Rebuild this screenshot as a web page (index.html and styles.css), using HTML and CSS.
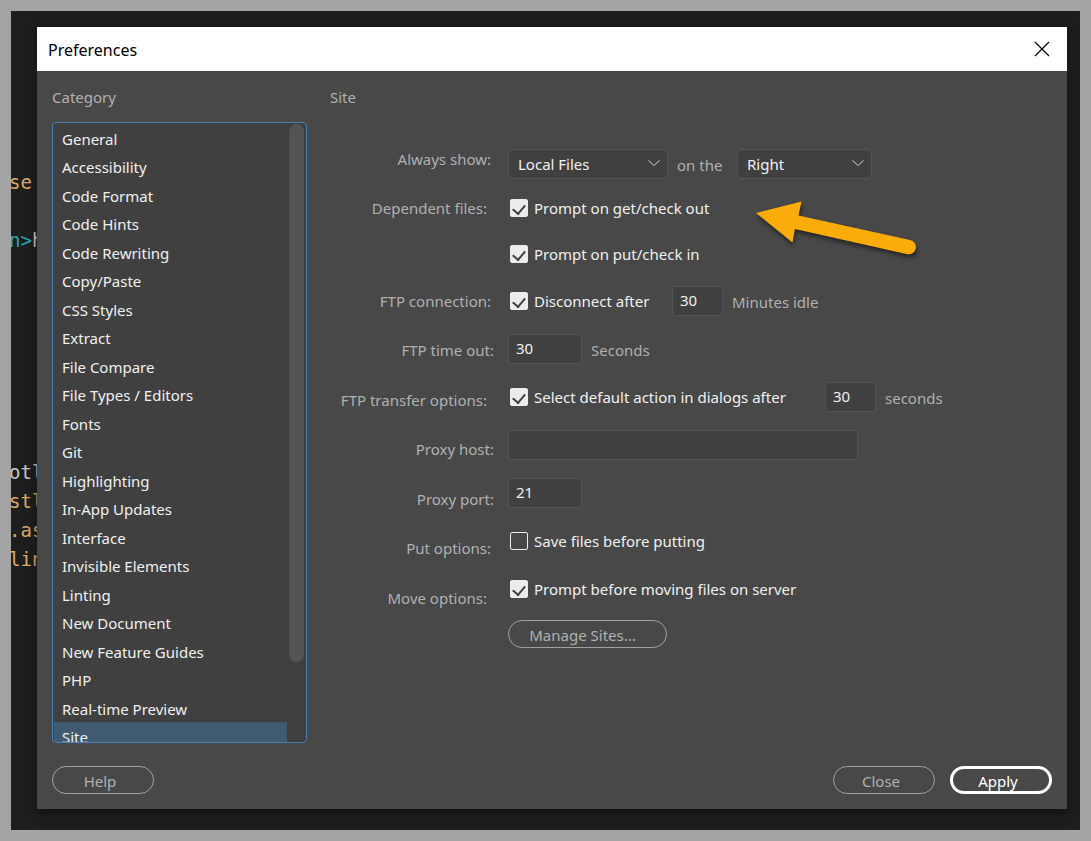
FILE: index.html
```html
<!DOCTYPE html>
<html lang="en">
<head>
	<meta charset="utf-8">
	<meta name="viewport" content="width=device-width, initial-scale=1">
	<title>Preferences</title>
	<link rel="stylesheet" href="styles.css">
</head>
<body>
	<div class="desktop">
<pre class="code" aria-hidden="true"><span class="string">se</span>

<span class="tag">n&gt;</span>h







otl
<span class="string">stl</span>
<span class="string">.as</span>
<span class="string">lin</span></pre>

		<div class="dialog" role="dialog" aria-labelledby="dialog-title">
			<header class="titlebar">
				<h1 id="dialog-title">Preferences</h1>
				<button class="close-icon" type="button" aria-label="Close window">
					<svg width="16" height="16" viewBox="0 0 16 16"><path d="M1 1L15 15M15 1L1 15" stroke="#000" stroke-width="1.2" fill="none"/></svg>
				</button>
			</header>

			<div class="content">
				<nav class="sidebar">
					<h2>Category</h2>
					<div class="list-box">
						<ul class="categories">
							<li><a href="#">General</a></li>
							<li><a href="#">Accessibility</a></li>
							<li><a href="#">Code Format</a></li>
							<li><a href="#">Code Hints</a></li>
							<li><a href="#">Code Rewriting</a></li>
							<li><a href="#">Copy/Paste</a></li>
							<li><a href="#">CSS Styles</a></li>
							<li><a href="#">Extract</a></li>
							<li><a href="#">File Compare</a></li>
							<li><a href="#">File Types / Editors</a></li>
							<li><a href="#">Fonts</a></li>
							<li><a href="#">Git</a></li>
							<li><a href="#">Highlighting</a></li>
							<li><a href="#">In-App Updates</a></li>
							<li><a href="#">Interface</a></li>
							<li><a href="#">Invisible Elements</a></li>
							<li><a href="#">Linting</a></li>
							<li><a href="#">New Document</a></li>
							<li><a href="#">New Feature Guides</a></li>
							<li><a href="#">PHP</a></li>
							<li><a href="#">Real-time Preview</a></li>
							<li class="selected"><a href="#">Site</a></li>
						</ul>
						<div class="scrollbar"><div class="thumb"></div></div>
					</div>
				</nav>

				<form class="panel">
					<h2>Site</h2>
					<div class="divider"></div>
					<div class="form">
						<div class="labels">
							<label for="show">Always show:</label>
							<label for="get" class="tall far">Dependent files:</label>
							<label for="disconnect">FTP connection:</label>
							<label for="timeout" class="near">FTP time out:</label>
							<label for="default-action" class="far">FTP transfer options:</label>
							<label for="host" class="near">Proxy host:</label>
							<label for="port" class="near">Proxy port:</label>
							<label for="save">Put options:</label>
							<label for="move" class="far">Move options:</label>
						</div>
						<div class="fields">
							<div class="row short">
								<span class="select wide">
									<select id="show"><option>Local Files</option><option>Remote Server</option></select>
									<svg width="14" height="8" viewBox="0 0 14 8"><path d="M1.5 1.500L7 6.500L12.500 1.500" stroke="#d0d0d0" fill="none"/></svg>
								</span>
								<label for="side" class="muted on-the">on the</label>
								<span class="select">
									<select id="side"><option>Right</option><option>Left</option></select>
									<svg width="14" height="8" viewBox="0 0 14 8"><path d="M1.5 1.500L7 6.500L12.500 1.500" stroke="#d0d0d0" fill="none"/></svg>
								</span>
							</div>
							<div class="row medium">
								<input type="checkbox" id="get" checked>
								<label for="get">Prompt on get/check out</label>
							</div>
							<div class="row medium">
								<input type="checkbox" id="put" checked>
								<label for="put">Prompt on put/check in</label>
							</div>
							<div class="row">
								<input type="checkbox" id="disconnect" checked>
								<label for="disconnect" class="disconnect">Disconnect after</label>
								<input type="text" id="idle" class="small" value="30">
								<label for="idle" class="muted">Minutes idle</label>
							</div>
							<div class="row">
								<input type="text" id="timeout" value="30">
								<label for="timeout" class="muted">Seconds</label>
							</div>
							<div class="row">
								<input type="checkbox" id="default-action" checked>
								<label for="default-action" class="default-action">Select default action in dialogs after</label>
								<input type="text" id="delay" class="small" value="30">
								<label for="delay" class="muted">seconds</label>
							</div>
							<div class="row">
								<input type="text" id="host" class="long" value="">
							</div>
							<div class="row">
								<input type="text" id="port" value="21">
							</div>
							<div class="row">
								<input type="checkbox" id="save">
								<label for="save">Save files before putting</label>
							</div>
							<div class="row">
								<input type="checkbox" id="move" checked>
								<label for="move">Prompt before moving files on server</label>
							</div>
							<div class="row short">
								<button class="btn manage" type="button">Manage Sites...</button>
							</div>
						</div>
						<svg class="arrow" width="180" height="70" viewBox="0 0 180 70">
							<path d="M6 18L51.500 6.500L48.500 20.500L160 45A7.200 7.200 0 0 1 157.500 59.200L45 34L42.500 47.500Z" fill="#f9ac0a"/>
						</svg>
					</div>
				</form>
			</div>

			<footer class="footer">
				<button class="btn help" type="button">Help</button>
				<button class="btn" type="button">Close</button>
				<button class="btn apply" type="button">Apply</button>
			</footer>
		</div>
	</div>
</body>
</html>
```
FILE: styles.css
```css
* {
	box-sizing: border-box;
}

body {
	display: flex;
	height: 100vh;
	margin: 0;
	padding: 11px;
	background-color: #a4a4a4;
	font-family: 'Noto Sans', sans-serif;
	font-size: 15px;
	color: #f0f0f0;
}

.desktop {
	position: relative;
	flex: 1;
	display: flex;
	min-width: 0;
	padding: 16px 13px 21px 26px;
	background-color: #1e1e1e;
	overflow: hidden;
}

/* editor behind the dialog */
.code {
	position: absolute;
	top: 157px;
	left: -2px;
	margin: 0;
	font-family: 'DejaVu Sans Mono', monospace;
	font-size: 19px;
	line-height: 29px;
	color: #c8c8c8;
}

.code .string {
	color: #d9ab66;
}

.code .tag {
	color: #2aa5b8;
}

.dialog {
	position: relative;
	flex: 1;
	display: flex;
	flex-direction: column;
	min-width: 0;
	background-color: #484848;
	box-shadow: 0 3px 10px rgba(0, 0, 0, 0.5);
}

.titlebar {
	display: flex;
	align-items: center;
	justify-content: space-between;
	height: 44px;
	padding: 0 17px 0 11px;
	background-color: #fff;
	color: #000;
}

h1 {
	margin: 0;
	padding-top: 2px;
	font-size: 16px;
	font-weight: normal;
}

.close-icon {
	display: flex;
	padding: 0;
	border: 0;
	background: none;
}

.content {
	flex: 1;
	display: grid;
	grid-template-columns: 255px 1fr;
	grid-template-rows: 100%;
	gap: 23px;
	min-height: 0;
	padding: 0 15px;
}

h2 {
	margin: 0;
	padding: 13px 0 12px;
	font-size: 15px;
	line-height: 26px;
	font-weight: normal;
	color: #b0b0b0;
}

.sidebar {
	display: flex;
	flex-direction: column;
}

.list-box {
	flex: 1;
	display: flex;
	min-height: 0;
	padding: 1px 2px 0 1px;
	border: 1px solid #4581b8;
	border-radius: 4px;
	background-color: #404040;
	overflow: hidden;
}

.categories {
	flex: 1;
	margin: 0;
	padding: 0;
	list-style: none;
}

.categories li {
	height: 28px;
	padding: 3px 8px 0;
	line-height: 24px;
}

.categories li:nth-child(even) {
	height: 29px;
}

.categories .selected {
	background-color: #405a72;
}

.categories a {
	color: #f0f0f0;
	text-decoration: none;
}

.scrollbar {
	width: 15px;
	margin-left: 2px;
}

.thumb {
	height: 87%;
	border-radius: 8px;
	background-color: #535353;
}

.divider {
	height: 4px;
	border-top: 1px solid #4b4b4b;
	border-bottom: 1px solid #4b4b4b;
}

.form {
	position: relative;
	display: flex;
	padding-top: 9px;
}

.labels {
	display: flex;
	flex-direction: column;
	width: 178px;
	color: #b0b0b0;
	text-align: right;
}

.labels label {
	height: 49px;
	padding-right: 17px;
	line-height: 49px;
}

.labels label:nth-child(even) {
	height: 50px;
}

.labels .tall:nth-child(even) {
	height: 93px;
}

.labels .near {
	padding-right: 14px;
}

.labels .far {
	padding-right: 21px;
}

.fields {
	flex: 1;
	padding-top: 8px;
}

.row {
	display: flex;
	align-items: center;
	height: 48px;
}

.row.medium {
	height: 46px;
}

.row.short {
	height: 42px;
}

.row label {
	white-space: nowrap;
}

.row .muted {
	padding: 2px 0 0 9px;
	color: #b0b0b0;
}

.row .on-the {
	width: 69px;
}

.row .disconnect {
	width: 138px;
}

.row .default-action {
	width: 291px;
}

.select {
	position: relative;
	width: 135px;
}

.select.wide {
	width: 160px;
}

.select svg {
	position: absolute;
	top: 10px;
	right: 7px;
	pointer-events: none;
}

select {
	display: block;
	appearance: none;
	width: 100%;
	height: 30px;
	padding: 0 10px 0 9px;
	border: 1px solid #535353;
	border-radius: 4px;
	background-color: #404040;
	font: inherit;
	color: #f0f0f0;
}

input[type="text"] {
	width: 74px;
	height: 30px;
	padding: 0 7px 2px;
	border: 1px solid #535353;
	border-radius: 3px;
	background-color: #404040;
	font: inherit;
	color: #f0f0f0;
}

input[type="text"].small {
	width: 51px;
}

input[type="text"].long {
	width: 350px;
}

input[type="checkbox"] {
	appearance: none;
	width: 18px;
	height: 18px;
	margin: 0 6px 0 2px;
	border: 1px solid #ececec;
	border-radius: 2px;
}

input[type="checkbox"]:checked {
	display: flex;
	justify-content: center;
	background-color: #ececec;
}

input[type="checkbox"]:checked::before {
	content: '';
	width: 6px;
	height: 10px;
	margin-top: 2px;
	border: solid #404040;
	border-width: 0 2px 2px 0;
	transform: rotate(40deg);
}

.btn {
	width: 102px;
	height: 28px;
	padding: 2px 6px 0 0;
	border: 1px solid #a0a0a0;
	border-radius: 14px;
	background: none;
	font: inherit;
	line-height: 20px;
	color: #b0b0b0;
}

.manage {
	width: 159px;
	padding-right: 10px;
}

.arrow {
	position: absolute;
	top: 69px;
	left: 420px;
	filter: drop-shadow(1px 3px 2px rgba(0, 0, 0, 0.5));
	pointer-events: none;
}

.footer {
	display: flex;
	gap: 15px;
	padding: 23px 15px 15px;
}

.help {
	margin-right: auto;
}

.apply {
	border: 3px solid #fff;
	color: #fff;
}
```
